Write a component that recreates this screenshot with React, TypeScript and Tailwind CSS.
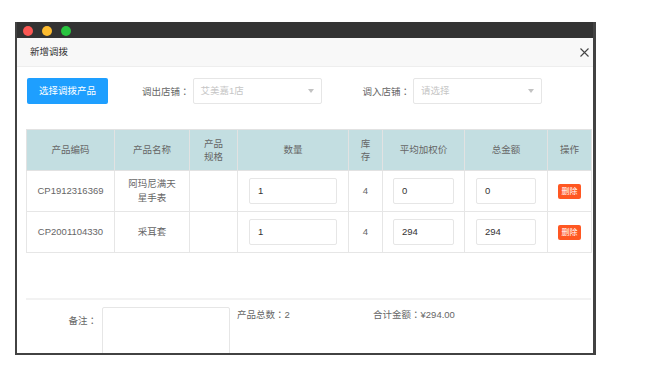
import React from 'react';

const rows = [
  { code: 'CP1912316369', name: '阿玛尼满天星手表', qty: '1', stock: '4', price: '0', total: '0' },
  { code: 'CP2001104330', name: '采耳套', qty: '1', stock: '4', price: '294', total: '294' }
];

// full-width colon, centred like the original's font
const Colon = () => <span className="font-['Noto_Sans_CJK_TC']">：</span>;

const Select = ({ placeholder }: { placeholder: string }) => (
  <div className="w-[129px] h-[26px] border border-[#e6e6e6] rounded-[2px] bg-white flex items-center justify-between pl-[7px] pr-[7px]">
    <span className="text-[#c6c6c6]">{placeholder}</span>
    <span className="w-0 h-0 border-l-[3px] border-r-[3px] border-t-[4px] border-l-transparent border-r-transparent border-t-[#c2c2c2]" />
  </div>
);

const CellInput = ({ value }: { value: string }) => (
  <div className="h-[26px] border border-[#e6e6e6] rounded-[2px] bg-white flex items-center pl-[8px] text-[#333]">
    {value}
  </div>
);

const App = () => {
  return (
    <div
      className="w-[645px] h-[383px] bg-white pt-[22px] pl-[15px] text-[9.5px] leading-[14px]"
      style={{ fontFamily: '"Liberation Sans", "Noto Sans CJK SC", sans-serif' }}
    >
      <div className="w-[581px] h-[333px] flex flex-col overflow-hidden border-l-2 border-r-[3px] border-b-2 border-[#424242] bg-white">
        {/* title bar */}
        <div className="h-[16px] shrink-0 bg-[#333333] flex items-center gap-[9px] pl-[6px] pt-[2px]">
          <span className="w-[10px] h-[10px] rounded-full bg-[#fc5753]" />
          <span className="w-[10px] h-[10px] rounded-full bg-[#fdbc2f]" />
          <span className="w-[10px] h-[10px] rounded-full bg-[#29c43f]" />
        </div>

        {/* dialog header */}
        <div className="h-[29px] shrink-0 bg-[#f8f8f8] border-b border-[#eeeeee] flex items-center justify-between pl-[13px] pr-[4px]">
          <span className="text-[#333]">新增调拨</span>
          <svg width="9" height="9" viewBox="0 0 9 9" className="mt-[1px]">
            <path d="M0.5 0.5 L8.5 8.5 M8.5 0.5 L0.5 8.5" stroke="#444" strokeWidth="1.1" fill="none" />
          </svg>
        </div>

        <div className="flex-1 pl-[9px] pr-[2px] pt-[11px]">
          {/* toolbar */}
          <div className="flex items-center h-[26px] pl-[1px]">
            <button className="w-[81px] h-[26px] rounded-[2px] bg-[#1e9fff] text-white">选择调拨产品</button>
            <span className="ml-[34px] mr-[3px] text-[#666]">调出店铺<Colon /></span>
            <Select placeholder="艾美嘉1店" />
            <span className="ml-[41px] mr-[3px] text-[#666]">调入店铺<Colon /></span>
            <Select placeholder="请选择" />
          </div>

          {/* table */}
          <table className="mt-[25px] w-[565px] table-fixed border-collapse text-center text-[#666]">
            <colgroup>
              <col className="w-[88px]" />
              <col className="w-[75px]" />
              <col className="w-[48px]" />
              <col className="w-[111px]" />
              <col className="w-[34px]" />
              <col className="w-[82px]" />
              <col className="w-[83px]" />
              <col className="w-[44px]" />
            </colgroup>
            <thead>
              <tr className="bg-[#c3dee1] h-[41px]">
                {['产品编码', '产品名称', '产品规格', '数量', '库存', '平均加权价', '总金额', '操作'].map((h) => (
                  <th key={h} className="font-normal border border-[#e2e2e2] px-[10px] leading-[13.5px]">
                    {h}
                  </th>
                ))}
              </tr>
            </thead>
            <tbody>
              {rows.map((r) => (
                <tr key={r.code} className="h-[41px]">
                  <td className="border border-[#e6e6e6] px-[6px]">{r.code}</td>
                  <td className="border border-[#e6e6e6] px-[10px]">{r.name}</td>
                  <td className="border border-[#e6e6e6]" />
                  <td className="border border-[#e6e6e6] px-[11px] text-left">
                    <CellInput value={r.qty} />
                  </td>
                  <td className="border border-[#e6e6e6]">{r.stock}</td>
                  <td className="border border-[#e6e6e6] px-[10px] text-left">
                    <CellInput value={r.price} />
                  </td>
                  <td className="border border-[#e6e6e6] px-[11px] text-left">
                    <CellInput value={r.total} />
                  </td>
                  <td className="border border-[#e6e6e6]">
                    <span className="inline-flex items-center justify-center w-[23px] h-[15px] rounded-[2px] bg-[#ff5722] text-white text-[8px] leading-[15px]">
                      删除
                    </span>
                  </td>
                </tr>
              ))}
            </tbody>
          </table>

          {/* divider */}
          <div className="mt-[45px] h-[2px] w-[565px] bg-[#f2f2f2]" />

          {/* footer */}
          <div className="flex pt-[7px] text-[#666]">
            <span className="w-[71px] text-right mt-[7px] leading-[13px]">备注<Colon /></span>
            <div className="ml-[5px] w-[128px] h-[60px] border border-[#e6e6e6] rounded-[2px] bg-white" />
            <span className="ml-[7px] w-[136px] mt-[1px] leading-[13px]">产品总数<Colon />2</span>
            <span className="mt-[1px] leading-[13px]">合计金额<Colon />¥294.00</span>
          </div>
        </div>
      </div>
    </div>
  );
};

export default App;
